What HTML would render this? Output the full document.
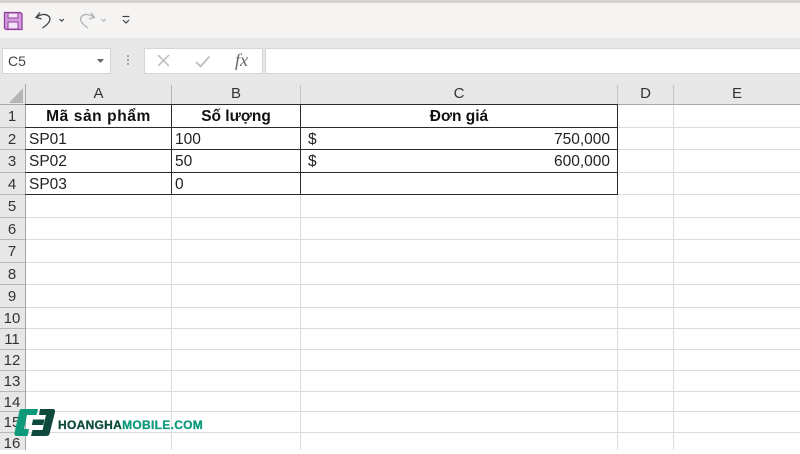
<!DOCTYPE html>
<html><head><meta charset="utf-8">
<style>
html,body{margin:0;padding:0}
body{width:800px;height:450px;overflow:hidden;position:relative;background:#fff;font-family:"Liberation Sans","DejaVu Sans",sans-serif;color:#222}
.a{position:absolute}
.h{position:absolute;background:#dcdcdc}
.k{position:absolute;background:#2a2a2a}
.t{position:absolute;white-space:nowrap;font-size:15.5px;line-height:20px;color:#222}
.b{font-weight:bold;color:#111;font-size:15.5px;text-align:center}
.hd{position:absolute;font-size:15px;line-height:20px;color:#333;text-align:center;white-space:nowrap}
.box{position:absolute;background:#fff;border:1px solid #d6d6d6;box-sizing:border-box}
</style></head><body>
<div class="a" style="left:0;top:0;width:800px;height:3px;background:#d4d2d0"></div>
<div class="a" style="left:0;top:3px;width:800px;height:35px;background:#f5f4f3"></div>
<div class="a" style="left:0;top:38px;width:800px;height:45px;background:#e8e8e8"></div>
<div class="a" style="left:0;top:83px;width:800px;height:22px;background:#e7e7e7"></div>
<div class="a" style="left:0;top:83px;width:25px;height:367px;background:#e7e7e7"></div>

<svg class="a" style="left:0;top:0" width="140" height="38" viewBox="0 0 140 38">
<path d="M4.5 12.5h16l1.5 1.5v15.5h-16l-1.500-1.500z" fill="#d79be0" stroke="#8f3f9e" stroke-width="1.300"/>
<rect x="8" y="13" width="10" height="5" fill="#f3e4f5" stroke="#8f3f9e"/>
<rect x="8" y="22" width="10" height="7" fill="#f3e4f5" stroke="#8f3f9e"/>
<path d="M40 12.500l-4 5 5.500 1.500M36.500 17.500c4-3.500 9-4 12-1.500 3 3 1.500 7-6 12" fill="none" stroke="#444" stroke-width="1.300"/>
<path d="M59.500 19l2.200 2.200 2.200-2.200" fill="none" stroke="#444" stroke-width="1.200"/>
<path d="M91 12.500l3.500 5-5.500 1.500M94 17.500c-4-3.500-9-4-12-1.500-3 3-1.500 7 6 12" fill="none" stroke="#b3b3b3" stroke-width="1.300"/>
<path d="M101.500 19l2.200 2.200 2.200-2.200" fill="none" stroke="#b3b3b3" stroke-width="1.200"/>
<path d="M122.500 16.500h7" stroke="#444" stroke-width="1.200"/>
<path d="M123 20l3 3 3-3" fill="none" stroke="#444" stroke-width="1.200"/>
</svg>

<div class="box" style="left:2px;top:48px;width:109px;height:26px"></div>
<div class="t" style="left:8px;top:51px;font-size:14px;color:#444">C5</div>
<svg class="a" style="left:96px;top:57px" width="10" height="8"><path d="M1 2h7l-3.500 4z" fill="#666"/></svg>
<div class="a" style="left:127px;top:55px;width:2px;height:2px;background:#a5a5a5;box-shadow:0 4px 0 #a5a5a5,0 8px 0 #a5a5a5"></div>
<div class="box" style="left:144px;top:48px;width:119px;height:26px"></div>
<div class="box" style="left:265px;top:48px;width:536px;height:26px"></div>
<svg class="a" style="left:150px;top:50px" width="80" height="22">
<path d="M8 5l11 11M19 5l-11 11" stroke="#bdbdbd" stroke-width="1.500" fill="none"/>
<path d="M46 12l4.500 4.500 9-10" stroke="#bdbdbd" stroke-width="1.800" fill="none"/>
</svg>
<div class="a" style="left:235px;top:48px;font:italic 18px/24px 'Liberation Serif',serif;color:#666">fx</div>

<svg class="a" style="left:8px;top:87px" width="17" height="17"><path d="M15 1v15H1z" fill="#b5b5b5"/></svg>

<!-- light grid -->
<div class="h" style="left:171px;top:105px;width:1px;height:345px"></div>
<div class="h" style="left:300px;top:105px;width:1px;height:345px"></div>
<div class="h" style="left:617px;top:105px;width:1px;height:345px"></div>
<div class="h" style="left:673px;top:105px;width:1px;height:345px"></div>
<div class="h" style="left:617px;top:127px;width:183px;height:1px"></div>
<div class="h" style="left:617px;top:149px;width:183px;height:1px"></div>
<div class="h" style="left:617px;top:172px;width:183px;height:1px"></div>
<div class="h" style="left:617px;top:194px;width:183px;height:1px"></div>
<div class="h" style="left:25px;top:217px;width:775px;height:1px"></div>
<div class="h" style="left:25px;top:239px;width:775px;height:1px"></div>
<div class="h" style="left:25px;top:262px;width:775px;height:1px"></div>
<div class="h" style="left:25px;top:284px;width:775px;height:1px"></div>
<div class="h" style="left:25px;top:307px;width:775px;height:1px"></div>
<div class="h" style="left:25px;top:328px;width:775px;height:1px"></div>
<div class="h" style="left:25px;top:349px;width:775px;height:1px"></div>
<div class="h" style="left:25px;top:370px;width:775px;height:1px"></div>
<div class="h" style="left:25px;top:391px;width:775px;height:1px"></div>
<div class="h" style="left:25px;top:411px;width:775px;height:1px"></div>
<div class="h" style="left:25px;top:432px;width:775px;height:1px"></div>

<!-- header separators -->
<div class="a" style="left:25px;top:84px;width:1px;height:366px;background:#a8a8a8"></div>
<div class="a" style="left:171px;top:85px;width:1px;height:20px;background:#b5b5b5"></div>
<div class="a" style="left:300px;top:85px;width:1px;height:20px;background:#c4c4c4"></div>
<div class="a" style="left:617px;top:85px;width:1px;height:20px;background:#c4c4c4"></div>
<div class="a" style="left:673px;top:85px;width:1px;height:20px;background:#c4c4c4"></div>
<div class="a" style="left:0;top:104px;width:800px;height:1px;background:#a8a8a8"></div>
<div class="a" style="left:0;top:127px;width:25px;height:1px;background:#b8b8b8;box-shadow:0 22px 0 #b8b8b8,0 45px 0 #b8b8b8,0 67px 0 #b8b8b8,0 90px 0 #b8b8b8,0 112px 0 #b8b8b8,0 135px 0 #b8b8b8,0 157px 0 #b8b8b8,0 180px 0 #b8b8b8,0 201px 0 #b8b8b8,0 222px 0 #b8b8b8,0 243px 0 #b8b8b8,0 264px 0 #b8b8b8,0 284px 0 #b8b8b8,0 305px 0 #b8b8b8"></div>

<!-- table borders -->
<div class="k" style="left:25px;top:104px;width:593px;height:1px"></div>
<div class="k" style="left:25px;top:127px;width:593px;height:1px"></div>
<div class="k" style="left:25px;top:149px;width:593px;height:1px"></div>
<div class="k" style="left:25px;top:172px;width:593px;height:1px"></div>
<div class="k" style="left:25px;top:194px;width:593px;height:1px"></div>
<div class="k" style="left:171px;top:105px;width:1px;height:90px"></div>
<div class="k" style="left:300px;top:105px;width:1px;height:90px"></div>
<div class="k" style="left:617px;top:105px;width:1px;height:90px"></div>

<!-- col headers -->
<div class="hd" style="left:26px;top:84px;width:145px">A</div>
<div class="hd" style="left:172px;top:84px;width:128px">B</div>
<div class="hd" style="left:301px;top:84px;width:316px">C</div>
<div class="hd" style="left:618px;top:84px;width:55px">D</div>
<div class="hd" style="left:674px;top:84px;width:126px">E</div>

<!-- row headers -->
<div class="hd" style="left:0;top:107px;width:24px">1</div>
<div class="hd" style="left:0;top:130px;width:24px">2</div>
<div class="hd" style="left:0;top:152px;width:24px">3</div>
<div class="hd" style="left:0;top:175px;width:24px">4</div>
<div class="hd" style="left:0;top:197px;width:24px">5</div>
<div class="hd" style="left:0;top:220px;width:24px">6</div>
<div class="hd" style="left:0;top:242px;width:24px">7</div>
<div class="hd" style="left:0;top:265px;width:24px">8</div>
<div class="hd" style="left:0;top:287px;width:24px">9</div>
<div class="hd" style="left:0;top:309px;width:24px">10</div>
<div class="hd" style="left:0;top:330px;width:24px">11</div>
<div class="hd" style="left:0;top:351px;width:24px">12</div>
<div class="hd" style="left:0;top:372px;width:24px">13</div>
<div class="hd" style="left:0;top:393px;width:24px">14</div>
<div class="hd" style="left:0;top:413px;width:24px">15</div>
<div class="hd" style="left:0;top:434px;width:24px">16</div>

<!-- cells -->
<div class="t b" style="left:26px;top:107px;width:145px;letter-spacing:.6px">Mã sản phẩm</div>
<div class="t b" style="left:172px;top:107px;width:128px">Số lượng</div>
<div class="t b" style="left:301px;top:107px;width:316px">Đơn giá</div>
<div class="t" style="left:29px;top:130px">SP01</div>
<div class="t" style="left:29px;top:152px">SP02</div>
<div class="t" style="left:29px;top:175px">SP03</div>
<div class="t" style="left:175px;top:130px">100</div>
<div class="t" style="left:175px;top:152px">50</div>
<div class="t" style="left:175px;top:175px">0</div>
<div class="t" style="left:308px;top:130px">$</div>
<div class="t" style="left:308px;top:152px">$</div>
<div class="t" style="right:190px;top:130px">750,000</div>
<div class="t" style="right:190px;top:152px">600,000</div>

<!-- logo -->
<svg class="a" style="left:14px;top:409px" width="42" height="28" viewBox="0 0 42 28">
<path d="M5.500 1.500Q6 0 8 0H24L22.500 6H13L10 20H15L13.500 27H3Q0 27 .5 24Z" fill="#0d9a7b"/>
<path d="M26 0H39Q41.500 0 41 3L35.500 25Q35 27 32 27H17L18.500 21H28.500L32 6H25Z" fill="#0e4a3c"/>
<path d="M19 10.500H30.500L29.300 16H17.800Z" fill="#0e4a3c"/>
</svg>
<div class="a" style="left:58px;top:417px;font:bold 12px/16px 'Liberation Sans',sans-serif;letter-spacing:.3px;-webkit-text-stroke:.3px currentColor;white-space:nowrap;color:#0e4a3c">HOANGHA<span style="color:#0d9a7b">MOBILE.COM</span></div>
</body></html>
